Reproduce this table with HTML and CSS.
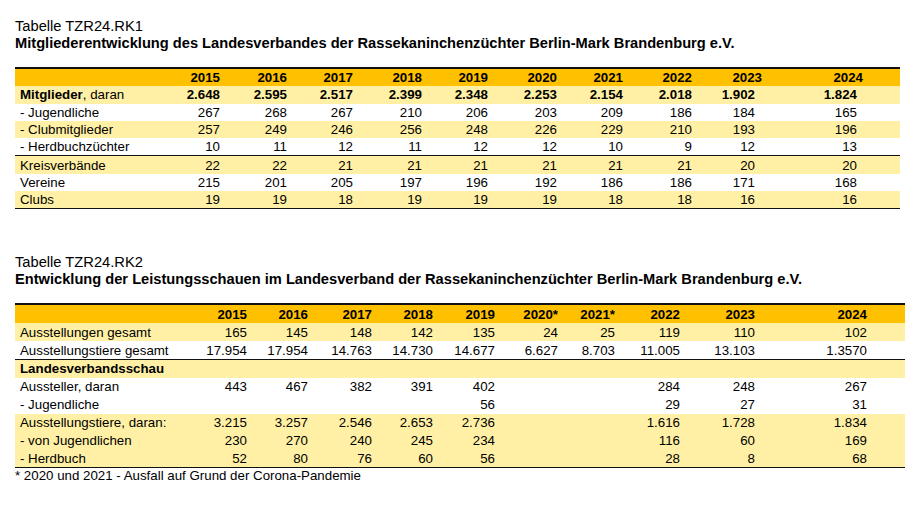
FILE: index.html
```html
<!DOCTYPE html>
<html lang="de">
<head>
<meta charset="utf-8">
<title>Tabellen TZR24</title>
<link rel="stylesheet" href="styles.css">
</head>
<body>
<div class="page">
  <section class="block block-1">
    <div class="caption">Tabelle TZR24.RK1</div>
    <div class="heading">Mitgliederentwicklung des Landesverbandes der Rassekaninchenzüchter Berlin-Mark Brandenburg e.V.</div>
    <table class="data t1">
      <colgroup><col><col><col><col><col><col><col><col><col><col><col><col></colgroup>
      <thead>
        <tr class="head"><th></th><th>2015</th><th>2016</th><th>2017</th><th>2018</th><th>2019</th><th>2020</th><th>2021</th><th>2022</th><th>2023</th><th>2024</th><th></th></tr>
      </thead>
      <tbody>
        <tr class="hl strong"><td><b>Mitglieder</b>, daran</td><td>2.648</td><td>2.595</td><td>2.517</td><td>2.399</td><td>2.348</td><td>2.253</td><td>2.154</td><td>2.018</td><td>1.902</td><td>1.824</td><td></td></tr>
        <tr><td>- Jugendliche</td><td>267</td><td>268</td><td>267</td><td>210</td><td>206</td><td>203</td><td>209</td><td>186</td><td>184</td><td>165</td><td></td></tr>
        <tr class="hl"><td>- Clubmitglieder</td><td>257</td><td>249</td><td>246</td><td>256</td><td>248</td><td>226</td><td>229</td><td>210</td><td>193</td><td>196</td><td></td></tr>
        <tr class="sep"><td>- Herdbuchzüchter</td><td>10</td><td>11</td><td>12</td><td>11</td><td>12</td><td>12</td><td>10</td><td>9</td><td>12</td><td>13</td><td></td></tr>
        <tr class="hl"><td>Kreisverbände</td><td>22</td><td>22</td><td>21</td><td>21</td><td>21</td><td>21</td><td>21</td><td>21</td><td>20</td><td>20</td><td></td></tr>
        <tr><td>Vereine</td><td>215</td><td>201</td><td>205</td><td>197</td><td>196</td><td>192</td><td>186</td><td>186</td><td>171</td><td>168</td><td></td></tr>
        <tr class="hl sep"><td>Clubs</td><td>19</td><td>19</td><td>18</td><td>19</td><td>19</td><td>19</td><td>18</td><td>18</td><td>16</td><td>16</td><td></td></tr>
      </tbody>
    </table>
  </section>

  <section class="block block-2">
    <div class="caption">Tabelle TZR24.RK2</div>
    <div class="heading">Entwicklung der Leistungsschauen im Landesverband der Rassekaninchenzüchter Berlin-Mark Brandenburg e.V.</div>
    <table class="data t2">
      <colgroup><col><col><col><col><col><col><col><col><col><col><col><col></colgroup>
      <thead>
        <tr class="head"><th></th><th>2015</th><th>2016</th><th>2017</th><th>2018</th><th>2019</th><th>2020*</th><th>2021*</th><th>2022</th><th>2023</th><th>2024</th><th></th></tr>
      </thead>
      <tbody>
        <tr class="hl"><td>Ausstellungen gesamt</td><td>165</td><td>145</td><td>148</td><td>142</td><td>135</td><td>24</td><td>25</td><td>119</td><td>110</td><td>102</td><td></td></tr>
        <tr class="sep"><td>Ausstellungstiere gesamt</td><td>17.954</td><td>17.954</td><td>14.763</td><td>14.730</td><td>14.677</td><td>6.627</td><td>8.703</td><td>11.005</td><td>13.103</td><td>1.3570</td><td></td></tr>
        <tr class="hl"><td><b>Landesverbandsschau</b></td><td></td><td></td><td></td><td></td><td></td><td></td><td></td><td></td><td></td><td></td><td></td></tr>
        <tr><td>Aussteller, daran</td><td>443</td><td>467</td><td>382</td><td>391</td><td>402</td><td></td><td></td><td>284</td><td>248</td><td>267</td><td></td></tr>
        <tr><td>- Jugendliche</td><td></td><td></td><td></td><td></td><td>56</td><td></td><td></td><td>29</td><td>27</td><td>31</td><td></td></tr>
        <tr class="hl"><td>Ausstellungstiere, daran:</td><td>3.215</td><td>3.257</td><td>2.546</td><td>2.653</td><td>2.736</td><td></td><td></td><td>1.616</td><td>1.728</td><td>1.834</td><td></td></tr>
        <tr class="hl"><td>- von Jugendlichen</td><td>230</td><td>270</td><td>240</td><td>245</td><td>234</td><td></td><td></td><td>116</td><td>60</td><td>169</td><td></td></tr>
        <tr class="hl sep"><td>- Herdbuch</td><td>52</td><td>80</td><td>76</td><td>60</td><td>56</td><td></td><td></td><td>28</td><td>8</td><td>68</td><td></td></tr>
      </tbody>
    </table>
    <div class="footnote">* 2020 und 2021 - Ausfall auf Grund der Corona-Pandemie</div>
  </section>
</div>
</body>
</html>
```

FILE: styles.css
```css
html, body {
  margin: 0;
  padding: 0;
  background: #ffffff;
}

body {
  font-family: "Liberation Sans", Arial, sans-serif;
  color: #000000;
}

.page {
  padding: 18px 0 0 15px;
  display: flex;
  flex-direction: column;
}

.block-2 {
  margin-top: 45px;
}

.caption {
  font-size: 14.7px;
  line-height: 17px;
}

.heading {
  font-size: 14.65px;
  line-height: 17px;
  font-weight: bold;
  white-space: nowrap;
}

.data {
  margin-top: 15px;
  border-collapse: collapse;
  border-spacing: 0;
  table-layout: fixed;
  font-size: 13.3px;
  border-top: 2px solid #111111;
}

.t1 { width: 885px; }
.t2 { width: 890px; }

.data th,
.data td {
  padding: 0 3px 0 0;
  height: 17.3px;
  line-height: 17px;
  text-align: right;
  white-space: nowrap;
  overflow: visible;
  vertical-align: middle;
}

.t2 th,
.t2 td {
  height: 17.9px;
}

.data td:first-child,
.data th:first-child {
  text-align: left;
  padding-left: 5px;
}

.data th {
  font-weight: bold;
}

.head {
  background: #ffc000;
}

.hl {
  background: #fff0a5;
}

.strong td {
  font-weight: bold;
}

.strong td:first-child {
  font-weight: normal;
}

.sep td {
  border-bottom: 1px solid #111111;
}

/* column widths, table 1 */
.t1 col:nth-child(1) { width: 141px; }
.t1 col:nth-child(2) { width: 67px; }
.t1 col:nth-child(3) { width: 67px; }
.t1 col:nth-child(4) { width: 66px; }
.t1 col:nth-child(5) { width: 69px; }
.t1 col:nth-child(6) { width: 66px; }
.t1 col:nth-child(7) { width: 69px; }
.t1 col:nth-child(8) { width: 66px; }
.t1 col:nth-child(9) { width: 69px; }
.t1 col:nth-child(10) { width: 70px; }
.t1 col:nth-child(11) { width: 101px; }
.t1 col:nth-child(12) { width: 34px; }

.t1 td:nth-child(10) { padding-right: 10px; }
.t1 td:nth-child(11) { padding-right: 9px; }

/* column widths, table 2 */
.t2 col:nth-child(1) { width: 174px; }
.t2 col:nth-child(2) { width: 61px; }
.t2 col:nth-child(3) { width: 61px; }
.t2 col:nth-child(4) { width: 64px; }
.t2 col:nth-child(5) { width: 61px; }
.t2 col:nth-child(6) { width: 62px; }
.t2 col:nth-child(7) { width: 63px; }
.t2 col:nth-child(8) { width: 57px; }
.t2 col:nth-child(9) { width: 65px; }
.t2 col:nth-child(10) { width: 75px; }
.t2 col:nth-child(11) { width: 112px; }
.t2 col:nth-child(12) { width: 35px; }

.footnote {
  font-size: 13.3px;
  line-height: 15px;
}
```
